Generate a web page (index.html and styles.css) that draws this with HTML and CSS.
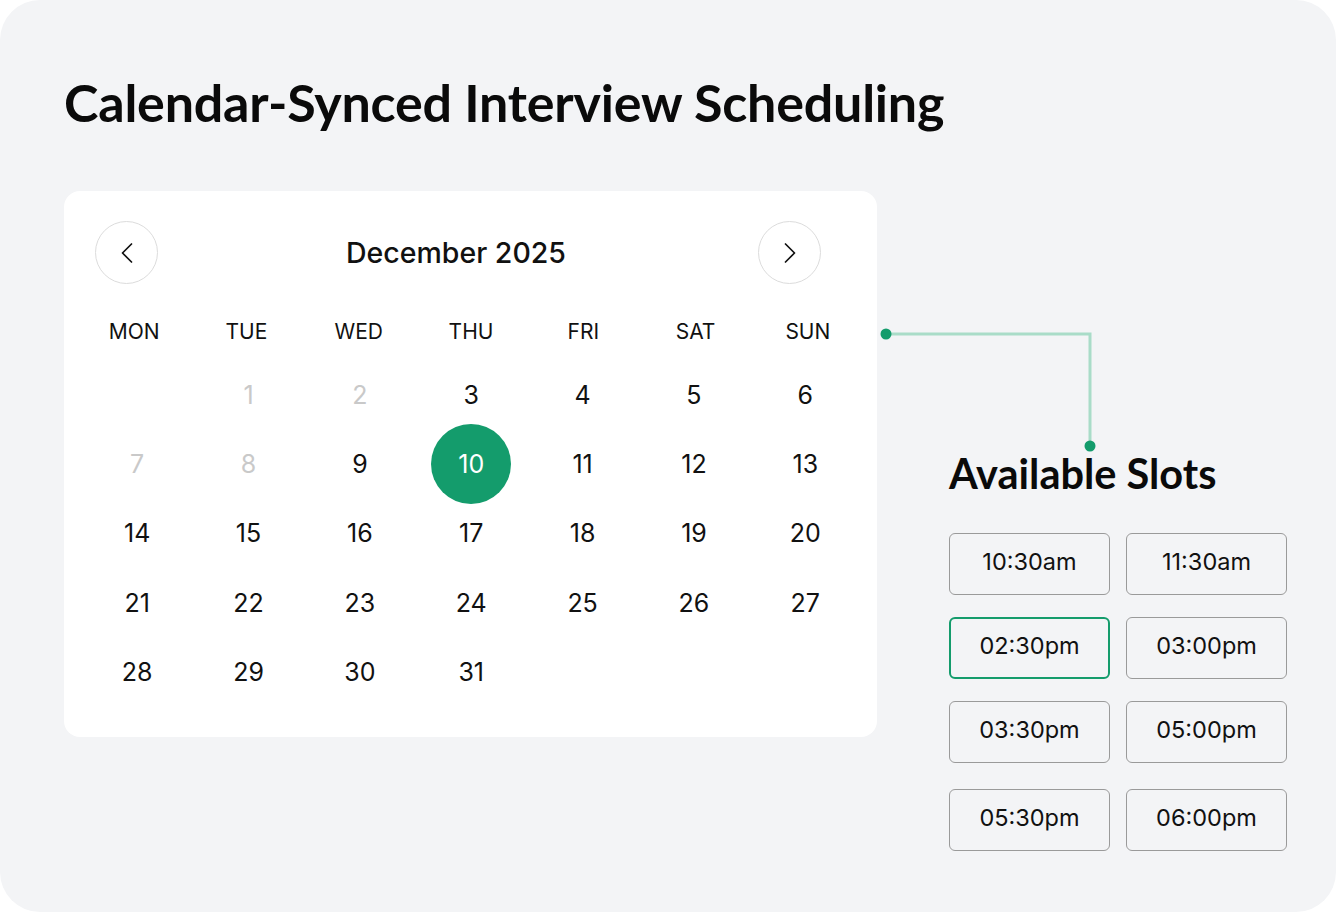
FILE: index.html
```html
<!DOCTYPE html>
<html lang="en">
<head>
<meta charset="utf-8">
<title>Calendar-Synced Interview Scheduling</title>
<link rel="stylesheet" href="styles.css">
</head>
<body>
<div class="frame">
  <h1 class="title">Calendar-Synced Interview Scheduling</h1>
  <div class="content">
    <section class="calendar">
      <div class="cal-head">
        <button class="nav" aria-label="Previous month">
          <svg width="20" height="22" viewBox="0 0 20 22"><path d="M14.5 2 L5.5 11 L14.5 20" fill="none" stroke="#111" stroke-width="1.7" stroke-linecap="round" stroke-linejoin="round"/></svg>
        </button>
        <div class="month">December 2025</div>
        <button class="nav" aria-label="Next month">
          <svg width="20" height="22" viewBox="0 0 20 22"><path d="M5.5 2 L14.5 11 L5.5 20" fill="none" stroke="#111" stroke-width="1.7" stroke-linecap="round" stroke-linejoin="round"/></svg>
        </button>
      </div>
      <div class="weekdays">
        <span>MON</span><span>TUE</span><span>WED</span><span>THU</span><span>FRI</span><span>SAT</span><span>SUN</span>
      </div>
      <div class="dates">
        <span class="d"></span>
        <span class="d muted">1</span>
        <span class="d muted">2</span>
        <span class="d">3</span>
        <span class="d">4</span>
        <span class="d">5</span>
        <span class="d">6</span>
        <span class="d muted">7</span>
        <span class="d muted">8</span>
        <span class="d">9</span>
        <span class="d"><span class="sel">10</span></span>
        <span class="d">11</span>
        <span class="d">12</span>
        <span class="d">13</span>
        <span class="d">14</span>
        <span class="d">15</span>
        <span class="d">16</span>
        <span class="d">17</span>
        <span class="d">18</span>
        <span class="d">19</span>
        <span class="d">20</span>
        <span class="d">21</span>
        <span class="d">22</span>
        <span class="d">23</span>
        <span class="d">24</span>
        <span class="d">25</span>
        <span class="d">26</span>
        <span class="d">27</span>
        <span class="d">28</span>
        <span class="d">29</span>
        <span class="d">30</span>
        <span class="d">31</span>
      </div>
    </section>
    <section class="slots">
      <h2 class="slots-title">Available Slots</h2>
      <div class="slot-grid">
        <button class="slot">10:30am</button>
        <button class="slot">11:30am</button>
        <button class="slot active">02:30pm</button>
        <button class="slot">03:00pm</button>
        <button class="slot">03:30pm</button>
        <button class="slot">05:00pm</button>
        <button class="slot">05:30pm</button>
        <button class="slot">06:00pm</button>
      </div>
    </section>
    <svg class="connector" width="220" height="124" viewBox="0 0 220 124">
      <path d="M6 6 H210 V118" fill="none" stroke="#a9dcc8" stroke-width="3"/>
      <circle cx="6" cy="6" r="5.5" fill="#149c6c"/>
      <circle cx="210" cy="118" r="5.5" fill="#149c6c"/>
    </svg>
  </div>
</div>
</body>
</html>
```
FILE: styles.css
```css
* { box-sizing: border-box; }
html, body { margin: 0; padding: 0; background: #ffffff; }
body { font-family: "Inter", "Liberation Sans", sans-serif; color: #111; }

.frame {
  width: 1336px;
  height: 912px;
  background: #f3f4f6;
  border-radius: 40px;
  padding: 70px 0 0 64px;
}

.title {
  margin: 0;
  font-family: "Lato", "Liberation Sans", sans-serif;
  font-weight: 700;
  font-size: 52px;
  line-height: 64px;
  color: #0a0a0a;
  letter-spacing: -0.2px;
}

.content {
  position: relative;
  display: flex;
  align-items: flex-start;
  gap: 72px;
  margin-top: 57px;
}

.calendar {
  width: 813px;
  background: #fff;
  border-radius: 16px;
  padding: 30px 13px 31px 14px;
}

.cal-head {
  display: flex;
  align-items: center;
  justify-content: space-between;
  padding: 0 43px 0 17px;
}

.nav {
  width: 63px;
  height: 63px;
  border-radius: 50%;
  border: 1px solid #dcdcdc;
  background: #fff;
  display: flex;
  align-items: center;
  justify-content: center;
  padding: 0;
}

.month {
  font-size: 28.5px;
  font-weight: 500;
  color: #111;
  margin-left: -4px;
}

.weekdays {
  display: grid;
  grid-template-columns: repeat(7, 1fr);
  margin-top: 36px;
  font-size: 21px;
  line-height: 24px;
  text-align: center;
  color: #111;
}

.dates {
  display: grid;
  grid-template-columns: repeat(7, 1fr);
  grid-auto-rows: 69.3px;
  margin-top: 16px;
  padding: 0 3px 0 3.5px;
  font-size: 25px;
}

.d {
  display: flex;
  align-items: center;
  justify-content: center;
  color: #111;
}
.d.muted { color: #c9c9c9; }

.sel {
  flex-shrink: 0;
  width: 80px;
  height: 80px;
  border-radius: 50%;
  background: #149c6c;
  color: #fff;
  display: flex;
  align-items: center;
  justify-content: center;
}

.slots {
  padding-top: 258px;
  width: 340px;
}

.slots-title {
  margin: 0;
  font-family: "Lato", "Liberation Sans", sans-serif;
  font-weight: 700;
  font-size: 41.5px;
  line-height: 48px;
  color: #0a0a0a;
}

.slot-grid {
  display: grid;
  grid-template-columns: 161px 161px;
  grid-template-rows: 62px 62px 62px 62px;
  column-gap: 16px;
  row-gap: 22px;
  margin-top: 36px;
}

.slot {
  font-family: "Inter", "Liberation Sans", sans-serif;
  font-size: 23.5px;
  color: #111;
  background: #f3f4f6;
  border: 1px solid #9a9a9a;
  border-radius: 6px;
  padding: 0 0 5px;
}
.slot.active { border: 2px solid #149c6c; }
.slot:nth-child(n+7) { position: relative; top: 4px; }

.connector {
  position: absolute;
  left: 816px;
  top: 137px;
}
```
